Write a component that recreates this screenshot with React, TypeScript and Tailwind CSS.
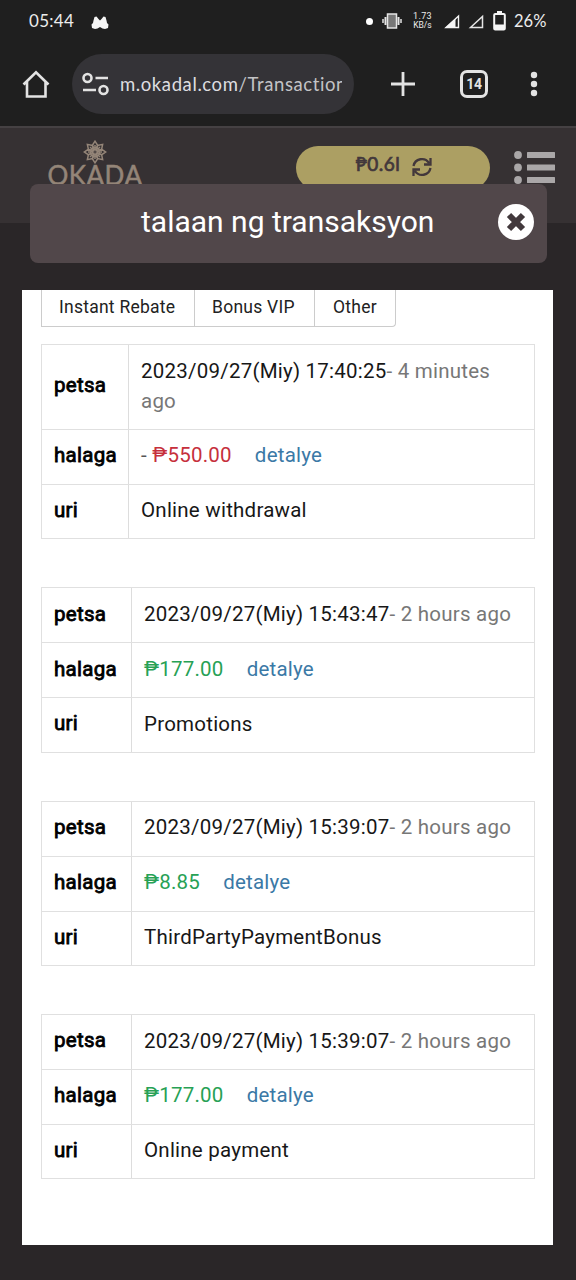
import { clsx } from 'clsx';

type Transaction = {
    date: string;
    ago: string;
    agoRest?: string;
    sign?: string;
    amount: string;
    type: string;
    tall?: boolean;
};

const transactions: Transaction[] = [
    { date: '2023/09/27(Miy) 17:40:25', ago: '- 4 minutes', agoRest: 'ago', sign: '- ', amount: '₱550.00', type: 'Online withdrawal', tall: true },
    { date: '2023/09/27(Miy) 15:43:47', ago: '- 2 hours ago', amount: '₱177.00', type: 'Promotions' },
    { date: '2023/09/27(Miy) 15:39:07', ago: '- 2 hours ago', amount: '₱8.85', type: 'ThirdPartyPaymentBonus' },
    { date: '2023/09/27(Miy) 15:39:07', ago: '- 2 hours ago', amount: '₱177.00', type: 'Online payment' },
];

function StatusBar() {
    return (
        <div className="flex h-[42px] items-center pl-[29px] pr-[29px] font-[Lato,sans-serif] text-[17px] text-[#ececec]">
            <span className="w-[46px] whitespace-nowrap tracking-[0.3px]">05:44</span>
            <svg className="ml-[16px] mt-[2px]" width="18" height="15" viewBox="0 0 18 15" fill="#f5f5f5">
                <path d="M2.500 5.500 3.500 2l2-.5L7.500 4 9 5.500 10.500 4l2-2.500 2 .5 1 3.500.5 2.500 1.500 1.500-.5 3.500-3 1-2.500-.5L9 12l-2.500 1.500L4 14l-3-1-.5-3.500L2 8z" />
            </svg>
            <div className="ml-auto flex items-center">
                <span className="mr-[-1px] h-[7px] w-[7px] rounded-full bg-white" />
                <svg className="ml-[10px]" width="20" height="16" viewBox="0 0 20 16" fill="none" stroke="#e5e5e5">
                    <rect x="5.500" y="1" width="9" height="14" strokeWidth="1.500" fill="#777" />
                    <path d="M3.500 4v8M16.500 4v8" strokeWidth="2" />
                    <path d="M1 6v4M19 6v4" strokeWidth="1.500" />
                </svg>
                <span className="ml-[11px] flex w-[19px] flex-col items-center font-[Roboto,sans-serif] text-[9px] leading-[9px]">
                    <span className="tracking-[0.4px]">1.73</span>
                    <span className="text-[8.500px]">KB/s</span>
                </span>
                <svg className="ml-[12px]" width="16" height="15" viewBox="0 0 16 15" fill="none">
                    <path d="M2 13.500 14.500 2v11.500z" stroke="#f5f5f5" strokeWidth="1.400" />
                    <path d="M1 14 11.500 4.500V14z" fill="#f5f5f5" />
                </svg>
                <svg className="ml-[8px]" width="16" height="15" viewBox="0 0 16 15" fill="none">
                    <path d="M2.500 13.500 14.500 2.500v11z" stroke="#e5e5e5" strokeWidth="1.500" />
                </svg>
                <svg className="ml-[9px]" width="13" height="20" viewBox="0 0 13 20" fill="none">
                    <path d="M4 0h5v3H4z" fill="#f5f5f5" />
                    <rect x="1.200" y="3" width="10.600" height="15.600" rx="1" stroke="#f5f5f5" strokeWidth="2" />
                    <path d="M1 13.500h11V19H1z" fill="#f5f5f5" />
                </svg>
                <span className="ml-[8px] w-[33px] whitespace-nowrap text-[16.500px]">26%</span>
            </div>
        </div>
    );
}

function AddressBar() {
    return (
        <div className="flex h-[84px] items-center pl-[22px]">
            <svg width="28" height="30" viewBox="0 0 28 30" fill="none" stroke="#e3e3e3" strokeWidth="2.600">
                <path d="M1.500 15.500 14 3.200l12.500 12.300M5 12.500v15h18.500v-15" />
            </svg>
            <div className="ml-[22px] flex h-[60px] w-[282px] items-center rounded-full bg-[#343337] pl-[10px]">
                <svg width="28" height="24" viewBox="0 0 28 24" fill="none" stroke="#e3e3e3" strokeWidth="2.600">
                    <circle cx="5.500" cy="6" r="4" />
                    <path d="M13.500 6H26M1 18h13" />
                    <circle cx="21.500" cy="18" r="4" />
                </svg>
                <span className="ml-[10px] mt-[2px] w-[222px] overflow-hidden whitespace-nowrap font-[Lato,sans-serif] text-[18.500px] tracking-[0.600px] text-[#c3c3c6]">
                    <span className="text-[#dedee0]">m.okadal.com</span>/Transaction
                </span>
            </div>
            <svg className="ml-[37px]" width="24" height="24" viewBox="0 0 24 24" stroke="#e3e3e3" strokeWidth="2.800">
                <path d="M12 0v24M0 12h24" />
            </svg>
            <span className="ml-[45px] flex h-[28px] w-[28px] items-center justify-center rounded-[7px] border-[3px] border-[#e3e3e3] font-[Roboto,sans-serif] text-[14px] font-bold tracking-[-0.3px] text-[#e3e3e3]">
                14
            </span>
            <svg className="ml-[42px]" width="8" height="26" viewBox="0 0 8 26" fill="#e3e3e3">
                <circle cx="4" cy="4" r="3.200" />
                <circle cx="4" cy="13" r="3.200" />
                <circle cx="4" cy="22" r="3.200" />
            </svg>
        </div>
    );
}

function Logo() {
    return (
        <div className="flex w-[96px] flex-col items-center text-[#948578]">
            <svg width="24" height="24" viewBox="-12 -12 24 24" fill="none" stroke="currentColor" strokeWidth="1.500">
                {[0, 45, 90, 135, 180, 225, 270, 315].map((angle) => (
                    <path key={angle} d="M0-2 2.800-6.500 0-10.800-2.800-6.500zM0-4v-3" transform={`rotate(${angle})`} />
                ))}
            </svg>
            <span className="-mt-px font-[Lato,sans-serif] text-[26px] leading-[24px] tracking-[0.5px] [-webkit-text-stroke:0.5px_#948578]">OKADA</span>
        </div>
    );
}

function SiteHeader() {
    return (
        <div className="flex h-[97px] items-start border-t-2 border-[#454143] bg-[#363133] pl-[47px] pt-[12px]">
            <Logo />
            <div className="ml-[153px] mt-[6px] flex h-[44px] w-[194px] justify-center gap-[12px] rounded-full bg-[#ac9f63] pl-[2px] pt-[8px] text-[#42373b]">
                <span className="font-[Lato,sans-serif] text-[19px] leading-[20px] tracking-[0.5px] [-webkit-text-stroke:0.7px_#42373b]">₱0.6l</span>
                <svg className="mt-[3px]" width="20" height="20" viewBox="0 0 20 20" fill="none" stroke="currentColor" strokeWidth="2.300">
                    <path d="M1.500 9A8.500 8.500 0 0 1 17 6M18.500 1v6.500H12M18.500 11A8.500 8.500 0 0 1 3 14M1.500 19v-6.500H8" />
                </svg>
            </div>
            <svg className="ml-[24px] mt-[11px]" width="42" height="36" viewBox="0 0 42 36" fill="#aaa7a8">
                {[4, 16.500, 29].map((y) => (
                    <g key={y}>
                        <circle cx="4" cy={y} r="3.900" />
                        <rect x="13" y={y - 3} width="28" height="6" rx="0.500" />
                    </g>
                ))}
            </svg>
        </div>
    );
}

function TransactionTable({ item }: { item: Transaction }) {
    const label = clsx(
        'flex shrink-0 items-center border-r border-[#ddd] pb-[3px] pl-[12px] tracking-[0.3px] text-black [-webkit-text-stroke:0.8px_black]',
        item.tall ? 'w-[87px]' : 'w-[90px]'
    );
    return (
        <div className="flex flex-col border border-[#e0e0e0] text-[20.500px] leading-[30.500px] tracking-[0.23px] text-[#171717]">
            <div className={clsx('flex', item.tall ? 'h-[84px]' : 'h-[54px]')}>
                <div className={label}>petsa</div>
                <div className="flex flex-col justify-center whitespace-nowrap pb-[2px] pl-[12px]">
                    <div>
                        {item.date}
                        <span className="text-[#777]">{item.ago}</span>
                    </div>
                    {item.agoRest && <div className="text-[#777]">{item.agoRest}</div>}
                </div>
            </div>
            <div className="flex h-[55px] border-t border-[#e0e0e0]">
                <div className={label}>halaga</div>
                <div className="flex items-center pb-[3px] pl-[12px]">
                    {item.sign && <span className="whitespace-pre text-[#555]">{item.sign}</span>}
                    <span className={item.sign ? 'text-[#c6303c]' : 'text-[#27a155]'}>{item.amount}</span>
                    <a className="ml-[23px] text-[#3b79a6]">detalye</a>
                </div>
            </div>
            <div className="flex h-[54.400px] border-t border-[#e0e0e0]">
                <div className={label}>uri</div>
                <div className="flex items-center pb-[2px] pl-[12px]">{item.type}</div>
            </div>
        </div>
    );
}

export default function App() {
    return (
        <div className="h-[1280px] w-[576px] overflow-hidden bg-[#2a2628] font-[Roboto,sans-serif]">
            <div className="bg-[#1f1f1f]">
                <StatusBar />
                <AddressBar />
            </div>
            <SiteHeader />

            {/* Dialog title */}
            <div className="relative -mt-[39px] ml-[30px] flex h-[79px] w-[517px] items-center rounded-[8px] bg-[#51474a] pl-[111px] text-white">
                <h1 className="-mt-[4px] whitespace-nowrap text-[30px]">talaan ng transaksyon</h1>
                <svg className="ml-auto mr-[13px] -mt-[3px]" width="36" height="36" viewBox="0 0 36 36">
                    <circle cx="18" cy="18" r="18" fill="#fff" />
                    <path d="m11 11 14 14M25 11 11 25" stroke="#42393c" strokeWidth="6" />
                </svg>
            </div>

            {/* Dialog body */}
            <div className="ml-[22px] mt-[27px] h-[955px] w-[531px] bg-white pl-[19px] pr-[18px]">
                <div className="flex h-[37px] text-[17.500px] tracking-[0.25px] text-[#222]">
                    <div className="flex w-[153px] items-center border-b border-l border-[#ccc] pb-[2px] pl-[17px]">Instant Rebate</div>
                    <div className="flex w-[120px] items-center border-b border-l border-[#ccc] pb-[2px] pl-[17px]">Bonus VIP</div>
                    <div className="flex w-[82px] items-center rounded-br-[4px] border-x border-b border-[#ccc] pb-[2px] pl-[18px]">Other</div>
                </div>
                <div className="mt-[17px] flex flex-col gap-[47.900px]">
                    {transactions.map((item, i) => (
                        <TransactionTable key={i} item={item} />
                    ))}
                </div>
            </div>
        </div>
    );
}
